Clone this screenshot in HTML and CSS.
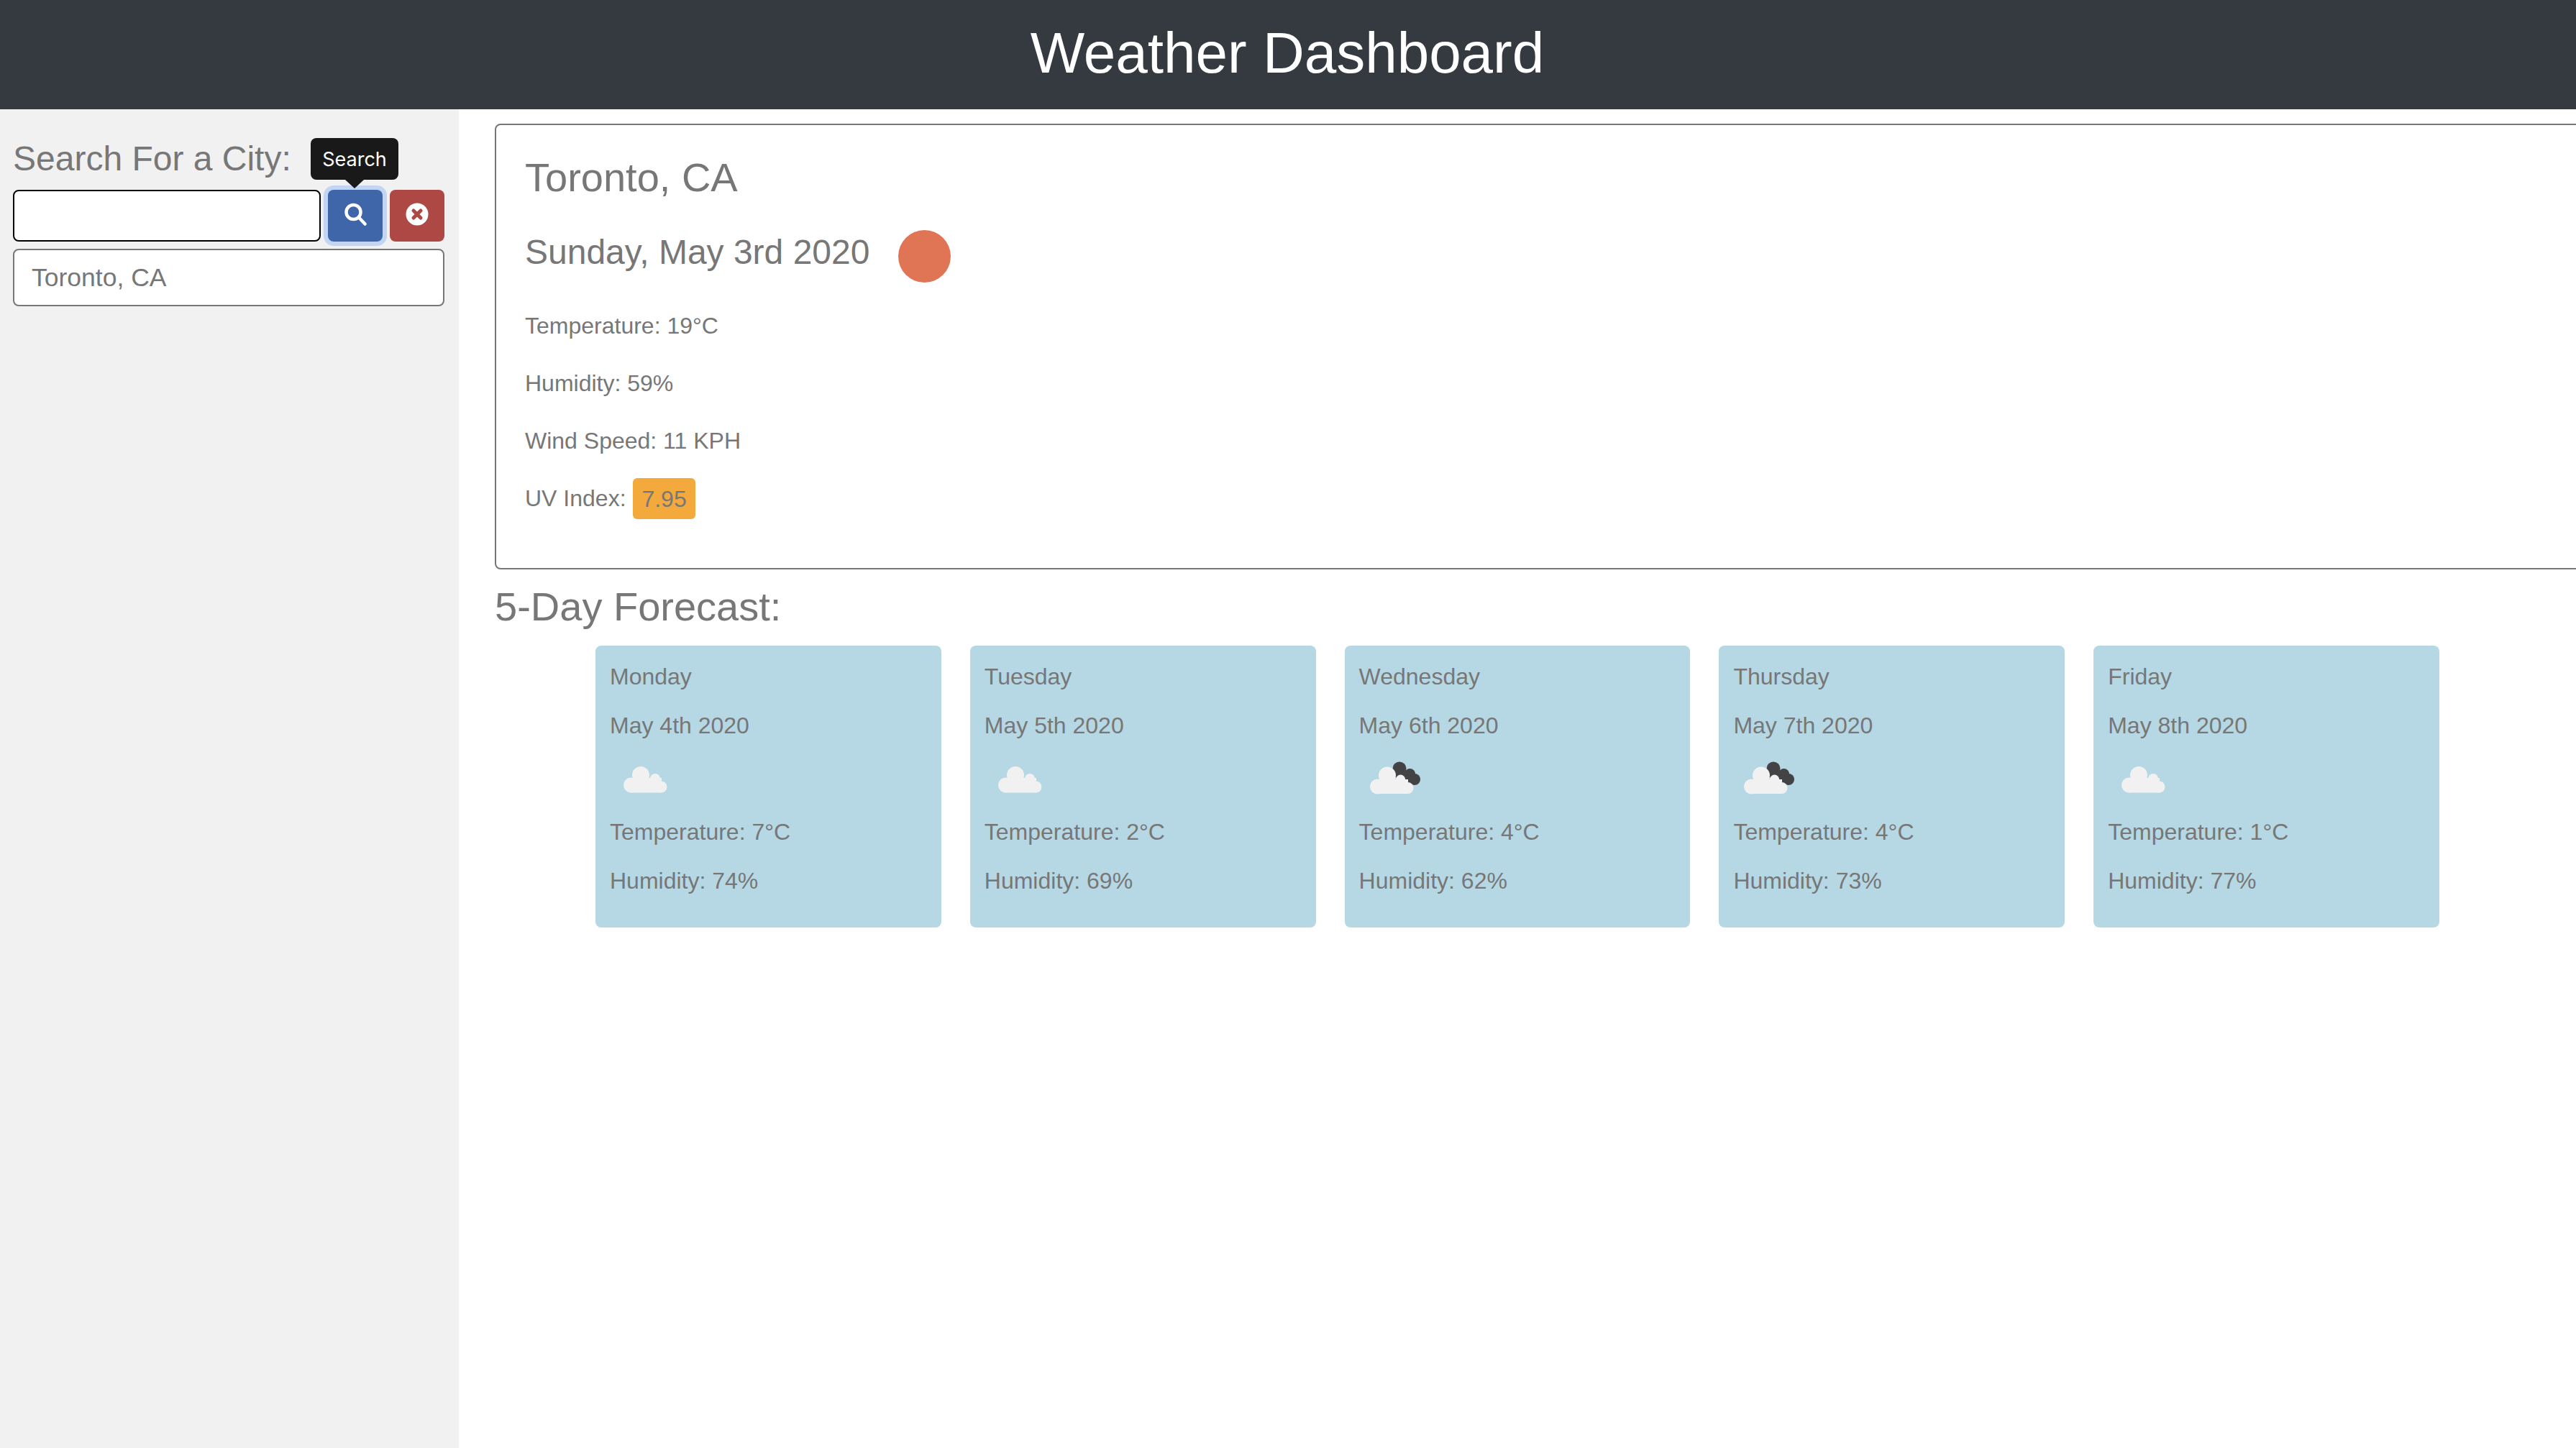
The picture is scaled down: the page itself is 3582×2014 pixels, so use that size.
FILE: index.html
```html
<!DOCTYPE html>
<html lang="en">
<head>
<meta charset="utf-8">
<title>Weather Dashboard</title>
<link rel="stylesheet" href="styles.css">
</head>
<body>
<svg class="defs" aria-hidden="true">
  <symbol id="cloud" viewBox="0 0 100 58">
    <g class="cloud-white">
      <circle cx="43" cy="26" r="12"/>
      <circle cx="63" cy="31" r="7"/>
      <circle cx="29.5" cy="40" r="10.5"/>
      <circle cx="71.5" cy="42.5" r="8"/>
      <rect x="29" y="30" width="43" height="20.5"/>
    </g>
  </symbol>
  <symbol id="cloud-dark" viewBox="0 0 100 58">
    <g class="cloud-black">
      <circle cx="56" cy="17" r="9.5"/>
      <circle cx="70.5" cy="24.5" r="7.5"/>
      <circle cx="77" cy="32" r="8"/>
      <path d="M49 14 L84 34 L78 39 L62 39 L45 24Z"/>
    </g>
    <g class="cloud-white">
      <circle cx="39" cy="26.5" r="12"/>
      <circle cx="57.5" cy="32" r="6.5"/>
      <circle cx="25.5" cy="42" r="10.5"/>
      <circle cx="67.5" cy="44" r="8"/>
      <rect x="25" y="32" width="43" height="20"/>
    </g>
  </symbol>
</svg>
<header class="topbar"><h1 class="topbar-title">Weather Dashboard</h1></header>
<div class="layout">
  <aside class="sidebar">
    <h4 class="search-label">Search For a City:</h4>
    <div class="search-row">
      <input class="search-input" type="text" aria-label="City">
      <button class="icon-btn btn-search" type="button" aria-label="Search">
        <svg class="icon" viewBox="0 0 32 32"><circle cx="13.5" cy="13" r="10" class="glass"/><path class="glass" d="M21 20.5 L29.5 29.5"/></svg>
        <span class="tooltip">Search</span>
      </button>
      <button class="icon-btn btn-clear" type="button" aria-label="Clear">
        <svg class="icon" viewBox="0 0 32 32"><circle cx="16" cy="16" r="15.5" class="disc"/><path class="cross" d="M11 11 L21 21 M21 11 L11 21"/></svg>
      </button>
    </div>
    <ul class="history"><li class="history-item">Toronto, CA</li></ul>
  </aside>
  <main class="content">
    <section class="current">
      <h3 class="city">Toronto, CA</h3>
      <div class="date-row">
        <h4 class="date">Sunday, May 3rd 2020</h4>
        <span class="sun"></span>
      </div>
      <p class="stat">Temperature: 19°C</p>
      <p class="stat">Humidity: 59%</p>
      <p class="stat">Wind Speed: 11 KPH</p>
      <p class="stat">UV Index: <span class="uv">7.95</span></p>
    </section>
    <h3 class="forecast-title">5-Day Forecast:</h3>
    <div class="forecast">
      <article class="day">
        <p class="day-line">Monday</p><p class="day-line">May 4th 2020</p>
        <svg class="day-icon"><use href="#cloud"/></svg>
        <p class="day-line">Temperature: 7°C</p><p class="day-line">Humidity: 74%</p>
      </article>
      <article class="day">
        <p class="day-line">Tuesday</p><p class="day-line">May 5th 2020</p>
        <svg class="day-icon"><use href="#cloud"/></svg>
        <p class="day-line">Temperature: 2°C</p><p class="day-line">Humidity: 69%</p>
      </article>
      <article class="day">
        <p class="day-line">Wednesday</p><p class="day-line">May 6th 2020</p>
        <svg class="day-icon"><use href="#cloud-dark"/></svg>
        <p class="day-line">Temperature: 4°C</p><p class="day-line">Humidity: 62%</p>
      </article>
      <article class="day">
        <p class="day-line">Thursday</p><p class="day-line">May 7th 2020</p>
        <svg class="day-icon"><use href="#cloud-dark"/></svg>
        <p class="day-line">Temperature: 4°C</p><p class="day-line">Humidity: 73%</p>
      </article>
      <article class="day">
        <p class="day-line">Friday</p><p class="day-line">May 8th 2020</p>
        <svg class="day-icon"><use href="#cloud"/></svg>
        <p class="day-line">Temperature: 1°C</p><p class="day-line">Humidity: 77%</p>
      </article>
    </div>
  </main>
</div>
</body>
</html>
```

FILE: styles.css
```css
* { box-sizing: border-box; }
html, body { height: 100%; }
body {
  margin: 0;
  display: flex;
  flex-direction: column;
  overflow: hidden;
  background: #fff;
  color: #777;
  font-family: "Liberation Sans", Arial, sans-serif;
  font-size: 32px;
  line-height: 48px;
}
.defs { display: none; }
h1, h3, h4, p, ul { margin: 0; padding: 0; font-weight: 400; }

.topbar {
  height: 152px;
  flex: none;
  display: flex;
  align-items: center;
  justify-content: center;
  background: #343a40;
}
.topbar-title { color: #fff; font-size: 80px; line-height: 96px; padding: 0 2px 4px 0; }

.layout { flex: 1; display: flex; min-height: 0; }
.sidebar { width: 638px; flex: none; padding: 40px 20px 0 18px; background: #f1f1f1; }
.search-label { font-size: 48px; line-height: 58px; margin-bottom: 14px; }
.search-row { display: flex; gap: 10px; margin-bottom: 10px; }
.search-input {
  width: 428px;
  height: 72px;
  padding: 0 20px;
  background: #fff;
  border: 2px solid #000;
  border-radius: 8px;
  outline: none;
}
.icon-btn {
  position: relative;
  width: 76px;
  height: 72px;
  padding: 0;
  display: flex;
  align-items: center;
  justify-content: center;
  border: none;
  border-radius: 8px;
}
.btn-search { background: #3e66a8; box-shadow: 0 0 0 6px #c2d5f3; }
.btn-clear { background: #ae4844; }
.icon { width: 32px; height: 32px; margin-bottom: 4px; display: block; }
.glass { fill: none; stroke: #fff; stroke-width: 4.5; stroke-linecap: round; }
.disc { fill: #fff; }
.cross { fill: none; stroke: #ae4844; stroke-width: 5; stroke-linecap: round; }
.tooltip {
  position: absolute;
  left: -24px;
  top: -72px;
  width: 122px;
  height: 58px;
  background: #191919;
  color: #fff;
  border-radius: 8px;
  font-family: Inter, "Liberation Sans", sans-serif;
  font-size: 27px;
  line-height: 60px;
  text-align: center;
}
.tooltip::after {
  content: "";
  position: absolute;
  left: 48px;
  top: 58px;
  border: solid transparent;
  border-width: 12px 13px 0;
  border-top-color: #191919;
}
.history { list-style: none; }
.history-item {
  height: 80px;
  padding: 0 24px;
  background: #fff;
  border: 2px solid #777;
  border-radius: 8px;
  font-size: 35.5px;
  line-height: 76px;
}

.content { flex: 1; min-width: 0; padding: 20px 0 0 50px; overflow: hidden; }
.current {
  margin-right: -20px;
  padding: 39px 40px 73px 40px;
  border: 2px solid #777;
  border-radius: 8px;
}
.city { font-size: 56px; line-height: 67px; margin-bottom: 40px; }
.date-row { display: flex; align-items: center; gap: 40px; margin-bottom: 36px; }
.date { font-size: 48px; line-height: 58px; margin-bottom: 12px; }
.sun { width: 73px; height: 73px; border-radius: 50%; background: #e07555; }
.stat { margin-bottom: 32px; }
.stat:last-child { margin-bottom: 0; }
.uv { padding: 10.5px 12px; margin-left: 1px; background: #f4a93c; border-radius: 6px; }
.forecast-title { font-size: 56px; line-height: 67px; margin: 18px 0 21px; }
.forecast {
  display: grid;
  grid-template-columns: repeat(5, 1fr);
  gap: 40px;
  margin: 0 190px 0 140px;
}
.day { padding: 19px 20px 22px; background: #b6d7e4; border-radius: 8px; }
.day-line { margin-bottom: 19.5px; }
.day-icon { display: block; width: 100px; height: 58px; margin: 2px 0 23px; }
.cloud-white { fill: #f1f1f1; }
.cloud-black { fill: #434346; }
```
